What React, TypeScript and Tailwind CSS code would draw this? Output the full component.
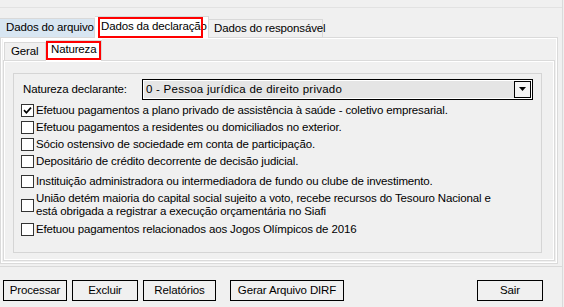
import React from 'react';

const options = [
  { label: 'Efetuou pagamentos a plano privado de assistência à saúde - coletivo empresarial.', checked: true, cls: 'mt-[2px] h-[17px]' },
  { label: 'Efetuou pagamentos a residentes ou domiciliados no exterior.', cls: 'h-[17px]' },
  { label: 'Sócio ostensivo de sociedade em conta de participação.', cls: 'h-[17px]' },
  { label: 'Depositário de crédito decorrente de decisão judicial.', cls: 'h-[17px]' },
  { label: 'Instituição administradora ou intermediadora de fundo ou clube de investimento.', cls: 'mt-[3px] h-[17px]' },
];

const CheckBox = ({ checked }: { checked?: boolean }) => (
  <span className="w-[13px] h-[13px] border border-[#333333] bg-white flex items-center justify-center shrink-0">
    {checked && (
      <svg width="9" height="9" viewBox="0 0 9 9">
        <path d="M1 4.2 L3.4 6.8 L8 1.6" stroke="#000" strokeWidth="1.7" fill="none" />
      </svg>
    )}
  </span>
);

const Button = ({ label, w }: { label: string; w: string }) => (
  <button className={`${w} h-[21px] border border-black bg-[#f0f0f0] text-[11.5px] flex items-center justify-center`}>
    {label}
  </button>
);

const App = () => {
  return (
    <div className="w-[564px] h-[307px] bg-[#f0f0f0] overflow-hidden text-[11.5px] tracking-[-0.15px] text-black font-['Liberation_Sans',Arial,sans-serif] whitespace-nowrap">
      <div className="w-[563px] h-full border-r border-[#dadada] flex flex-col">
        <div className="h-[8px] border-b border-[#e2e2e2] shrink-0" />

        {/* abas principais */}
        <div className="mt-[8px] h-[21px] flex items-end shrink-0">
          <div className="w-[95px] h-[19px] shrink-0 bg-[#d8e6f2] border-t border-r border-[#d9d9d9] pl-[6px] flex items-center">
            Dados do arquivo
          </div>
          <div className="relative z-10 w-[114px] h-[22px] shrink-0 mb-[-1px] bg-white border-t border-r border-[#d9d9d9] pl-[6px] pb-[2px] flex items-center overflow-hidden">
            Dados da declaração
            <span className="absolute left-[3px] top-0 w-[105px] h-[21px] border-2 border-[#ff0000]" />
          </div>
          <div className="w-[114px] h-[18px] shrink-0 border-t border-r border-[#d9d9d9] pl-[5px] flex items-center">
            Dados do responsável
          </div>
        </div>

        {/* painel da aba */}
        <div className="w-[558px] h-[227px] border border-[#dadada] bg-white p-[1px] shrink-0">
          <div className="h-full bg-[#f0f0f0] pl-[1px] pr-[1px] pb-[1px] flex flex-col">
            <div className="h-[21px] flex items-end shrink-0 bg-white">
              <div className="ml-[1px] w-[42px] h-[18px] shrink-0 border-t border-l border-r border-[#d9d9d9] bg-[#f0f0f0] pl-[6px] flex items-center">
                Geral
              </div>
              <div className="relative z-10 w-[56px] h-[21px] shrink-0 mb-[-1px] bg-white border-t border-r border-[#d9d9d9] pl-[5px] pb-[3px] flex items-center">
                Natureza
                <span className="absolute left-[0px] top-0 w-[55px] h-[19px] border-2 border-[#ff0000]" />
              </div>
              <div className="flex-1 h-full bg-[#f0f0f0]" />
            </div>

            <div className="flex-1 border border-[#dadada] bg-white p-[1px]">
              <div className="h-full bg-[#f0f0f0] pl-[8px] pt-[11px]">
                <div className="w-[529px] h-[180px] border border-[#d5d5d5] pl-[7px] pt-[5px]">
                  <div className="flex items-center h-[21px]">
                    <span className="ml-[2px] w-[119px]">Natureza declarante:</span>
                    <div className="w-[391px] h-[21px] border border-black bg-white p-[1px] flex">
                      <div className="flex-1 bg-[#e5e5e5] pl-[2px] flex items-center tracking-[0.25px]">0 - Pessoa jurídica de direito privado</div>
                      <div className="w-[17px] border border-black bg-[#f4f4f4] flex items-center justify-center">
                        <svg width="7" height="5" viewBox="0 0 7 5">
                          <path d="M0 0 H7 L3.5 4 Z" fill="#000" />
                        </svg>
                      </div>
                    </div>
                  </div>

                  {options.map(o => (
                    <div key={o.label} className={`flex items-center gap-[2px] ${o.cls}`}>
                      <CheckBox checked={o.checked} />
                      <span>{o.label}</span>
                    </div>
                  ))}

                  <div className="mt-[1px] h-[28px] flex items-center gap-[2px]">
                    <CheckBox />
                    <span className="leading-[13px]">
                      União detém maioria do capital social sujeito a voto, recebe recursos do Tesouro Nacional e<br />
                      está obrigada a registrar a execução orçamentária no Siafi
                    </span>
                  </div>

                  <div className="mt-[2px] h-[17px] flex items-center gap-[2px]">
                    <CheckBox />
                    <span>Efetuou pagamentos relacionados aos Jogos Olímpicos de 2016</span>
                  </div>
                </div>
              </div>
            </div>
          </div>
        </div>

        <div className="mt-[2px] border-t border-[#d9d9d9] shrink-0" />

        {/* botões */}
        <div className="mt-[13px] flex items-center pl-[3px] shrink-0">
          <Button label="Processar" w="w-[64px]" />
          <div className="ml-[5px]"><Button label="Excluir" w="w-[66px]" /></div>
          <div className="ml-[5px]"><Button label="Relatórios" w="w-[73px]" /></div>
          <div className="ml-[14px]"><Button label="Gerar Arquivo DIRF" w="w-[114px]" /></div>
          <div className="ml-[133px]"><Button label="Sair" w="w-[66px]" /></div>
        </div>

        <div className="mt-[6px] border-t border-[#d9d9d9] shrink-0" />
      </div>
    </div>
  );
};

export default App;
